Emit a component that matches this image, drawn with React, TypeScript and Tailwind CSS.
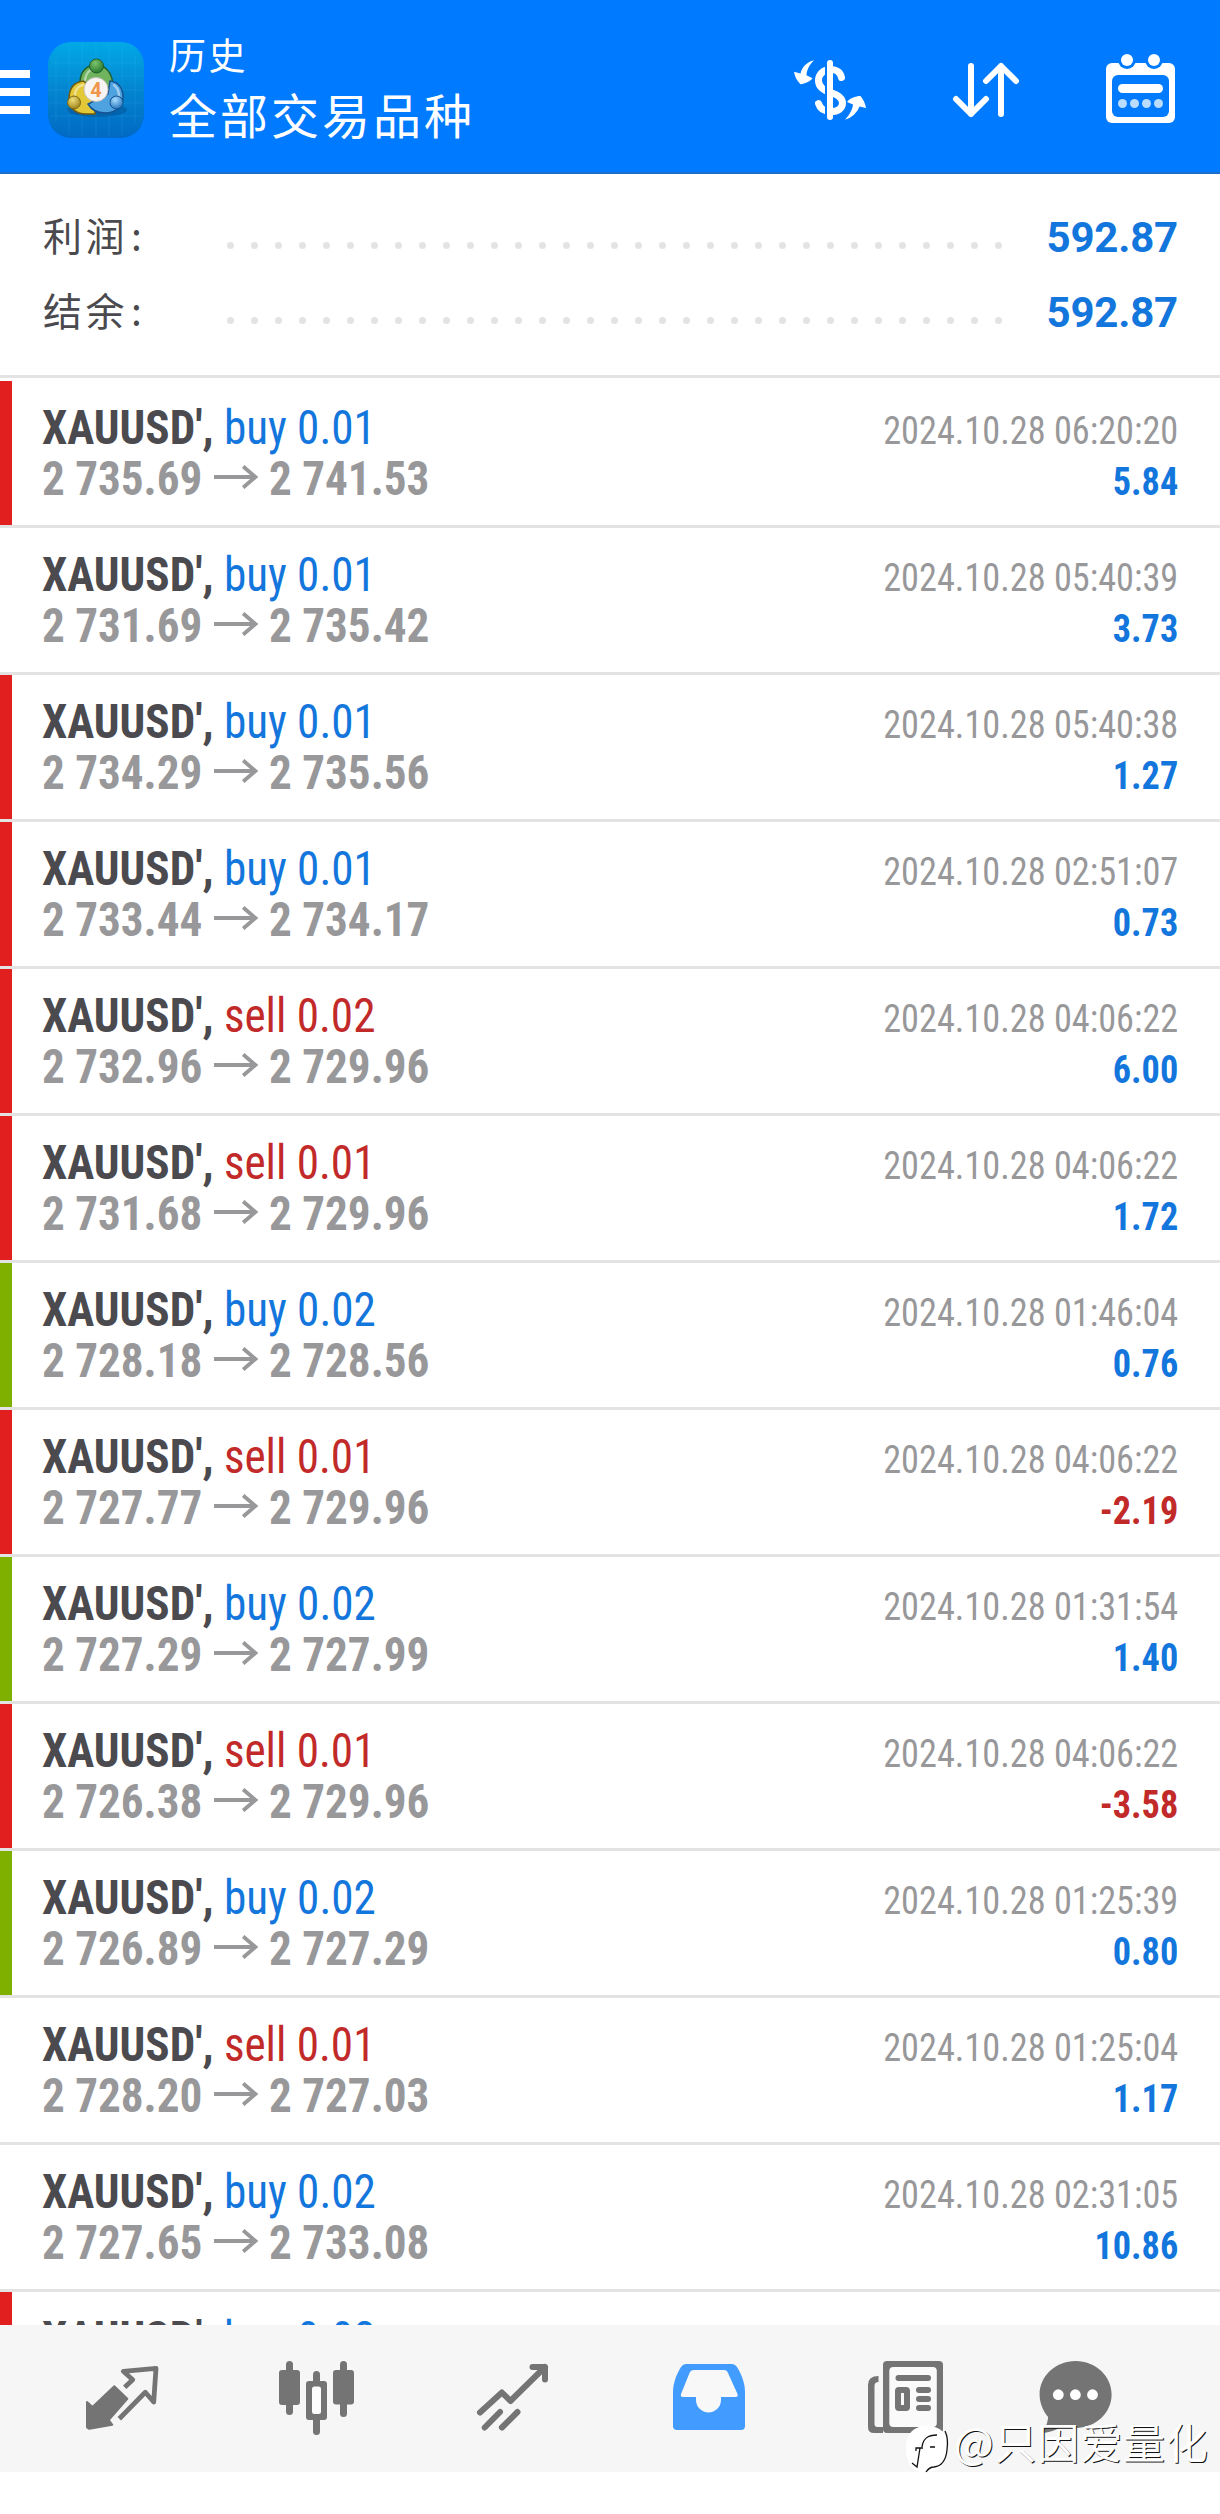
import { clsx } from "clsx"

type Trade = {
  side: "buy" | "sell"
  lot: string
  open: string
  close: string
  time: string
  profit: string
  mark?: "sl" | "tp"
}

const trades: Trade[] = [
  { side: "buy", lot: "0.01", open: "2 735.69", close: "2 741.53", time: "2024.10.28 06:20:20", profit: "5.84", mark: "sl" },
  { side: "buy", lot: "0.01", open: "2 731.69", close: "2 735.42", time: "2024.10.28 05:40:39", profit: "3.73" },
  { side: "buy", lot: "0.01", open: "2 734.29", close: "2 735.56", time: "2024.10.28 05:40:38", profit: "1.27", mark: "sl" },
  { side: "buy", lot: "0.01", open: "2 733.44", close: "2 734.17", time: "2024.10.28 02:51:07", profit: "0.73", mark: "sl" },
  { side: "sell", lot: "0.02", open: "2 732.96", close: "2 729.96", time: "2024.10.28 04:06:22", profit: "6.00", mark: "sl" },
  { side: "sell", lot: "0.01", open: "2 731.68", close: "2 729.96", time: "2024.10.28 04:06:22", profit: "1.72", mark: "sl" },
  { side: "buy", lot: "0.02", open: "2 728.18", close: "2 728.56", time: "2024.10.28 01:46:04", profit: "0.76", mark: "tp" },
  { side: "sell", lot: "0.01", open: "2 727.77", close: "2 729.96", time: "2024.10.28 04:06:22", profit: "-2.19", mark: "sl" },
  { side: "buy", lot: "0.02", open: "2 727.29", close: "2 727.99", time: "2024.10.28 01:31:54", profit: "1.40", mark: "tp" },
  { side: "sell", lot: "0.01", open: "2 726.38", close: "2 729.96", time: "2024.10.28 04:06:22", profit: "-3.58", mark: "sl" },
  { side: "buy", lot: "0.02", open: "2 726.89", close: "2 727.29", time: "2024.10.28 01:25:39", profit: "0.80", mark: "tp" },
  { side: "sell", lot: "0.01", open: "2 728.20", close: "2 727.03", time: "2024.10.28 01:25:04", profit: "1.17" },
  { side: "buy", lot: "0.02", open: "2 727.65", close: "2 733.08", time: "2024.10.28 02:31:05", profit: "10.86" },
]

function AppLogo() {
  return (
    <svg className="ml-[18px] size-24 shrink-0" viewBox="0 0 96 96">
      <defs>
        <linearGradient id="tile" x1="0" y1="0" x2="0" y2="1">
          <stop offset="0" stopColor="#02a9e6" />
          <stop offset="0.5" stopColor="#0385cf" />
          <stop offset="1" stopColor="#0169c4" />
        </linearGradient>
        <radialGradient id="green" cx="0.4" cy="0.3" r="0.8">
          <stop offset="0" stopColor="#7cc36c" />
          <stop offset="1" stopColor="#1f7027" />
        </radialGradient>
        <radialGradient id="yellow" cx="0.4" cy="0.3" r="0.8">
          <stop offset="0" stopColor="#efe07c" />
          <stop offset="1" stopColor="#94770f" />
        </radialGradient>
        <radialGradient id="blue" cx="0.4" cy="0.3" r="0.8">
          <stop offset="0" stopColor="#a7dcff" />
          <stop offset="1" stopColor="#1668b4" />
        </radialGradient>
      </defs>
      <rect width="96" height="96" rx="23" fill="url(#tile)" />
      <path
        d="M8 16v64M21 3v90M34 1v94M48 1v94M61 1v94M74 3v90M87 14v68M3 21h90M1 34h94M1 48h94M1 61h94M3 74h90"
        stroke="#5fd0ff"
        strokeOpacity="0.14"
        strokeWidth="1"
      />
      <ellipse cx="49" cy="68" rx="30" ry="7" fill="#043f78" opacity="0.35" />
      <path d="M32 41c0-12 7-18 16-18s16 7 17 20l-6 8H38z" fill="#6fb35f" stroke="#1f5f2a" strokeWidth="1.5" />
      <path d="M36 39c-10 1-15 7-15 18 0 9 7 15 17 15h9V52z" fill="#e3c838" stroke="#6f5a10" strokeWidth="1.5" />
      <path d="M62 39c9 1 13 8 13 16 0 10-8 16-18 16-8 0-14-4-17-9l20-10z" fill="#4fa2e0" stroke="#155391" strokeWidth="1.5" />
      <path d="M37 38c1-7 5-11 10-11M27 53c0-5 3-9 8-10M66 43c4 3 5 7 5 11" fill="none" stroke="#fff" strokeOpacity="0.45" strokeWidth="2.5" strokeLinecap="round" />
      <circle cx="48.500" cy="24" r="7" fill="url(#green)" stroke="#1f5f2a" />
      <circle cx="26" cy="60.500" r="6.500" fill="url(#yellow)" stroke="#7d6512" />
      <circle cx="68.500" cy="60.500" r="6.500" fill="url(#blue)" stroke="#155391" />
      <circle cx="48" cy="47.500" r="12" fill="#f7f5f3" stroke="#c9c0b8" />
      <text x="48" y="54.500" textAnchor="middle" fontFamily="Roboto, sans-serif" fontSize="20" fontWeight="700" fill="#f0954c">
        4
      </text>
    </svg>
  )
}

function CurrencyIcon() {
  return (
    <svg className="h-[72px] w-[84px]" viewBox="0 0 84 72" fill="none">
      <path
        d="M56.500 23.500c-1-5-5-8-10.500-8-8 0-12.500 5-12.500 11 0 6 4 9.500 12 12 8 2.500 12 5.500 12 10.500 0 5.500-4.500 8.500-11.500 8.500-7 0-11-3-12.500-8"
        stroke="#fff"
        strokeWidth="7"
        strokeLinecap="round"
      />
      <path d="M40 8h4v56h-4z" fill="#007aff" />
      <path d="M45 9v54" stroke="#fff" strokeWidth="6" strokeLinecap="round" />
      <path d="M29 6.300C22 8 17 13 15.500 19.500L9 17.700c.5 4.500 3 9 6.500 12.500 4.500-.5 9.500-2.500 12-5.900l-6-3c0-5.500 3.500-11 7.500-15z" fill="#fff" />
      <path d="M60 65.700c7-2 12-7 14.500-13.200l6.500 1.500c-.5-4.500-3-9-5.500-12-5 0-11 2.500-13.500 6l6 2.500c-.5 5.500-4 11-8 15.200z" fill="#fff" />
    </svg>
  )
}

function SortIcon() {
  return (
    <svg className="size-[72px]" viewBox="0 0 72 72" fill="none" stroke="#fff" strokeWidth="6" strokeLinecap="round" strokeLinejoin="round">
      <path d="M21 12v48M6 45l15 15 15-15M51 60V12M36 27l15-15 15 15" />
    </svg>
  )
}

function CalendarIcon() {
  return (
    <svg className="size-[72px]" viewBox="0 0 72 72">
      <rect x="1" y="9" width="69" height="60" rx="6" fill="#fff" />
      <rect x="7" y="21" width="57" height="42" rx="6" fill="#007aff" />
      <circle cx="22" cy="6" r="9" fill="#007aff" />
      <circle cx="49" cy="6" r="9" fill="#007aff" />
      <circle cx="22" cy="6" r="6" fill="#fff" />
      <circle cx="49" cy="6" r="6" fill="#fff" />
      <rect x="13" y="30" width="45" height="9" rx="4.500" fill="#fff" />
      <g fill="#b9dcff">
        <circle cx="17.500" cy="49.500" r="4.500" />
        <circle cx="29.500" cy="49.500" r="4.500" />
        <circle cx="41.500" cy="49.500" r="4.500" />
        <circle cx="53.500" cy="49.500" r="4.500" />
      </g>
    </svg>
  )
}

function Header() {
  return (
    <header className="flex h-[174px] items-start border-b-2 border-[#1a6fce] bg-[#007aff] text-white">
      <div className="flex w-[30px] shrink-0 flex-col gap-[10px] pt-[70px]">
        <span className="h-2 bg-white" />
        <span className="h-2 bg-white" />
        <span className="h-2 bg-white" />
      </div>
      <div className="pt-[42px]">
        <AppLogo />
      </div>
      <div className="ml-[25px] flex flex-col pt-[27px] font-['Noto_Sans_CJK_SC',sans-serif]">
        <span className="text-[37px] leading-[54px] tracking-[2.500px]">历史</span>
        <span className="text-[48px] leading-[64px] tracking-[3px]">全部交易品种</span>
      </div>
      <div className="ml-auto flex items-start pr-[43px] pt-[54px]">
        <CurrencyIcon />
        <div className="ml-[81px]">
          <SortIcon />
        </div>
        <div className="ml-[83px]">
          <CalendarIcon />
        </div>
      </div>
    </header>
  )
}

function SummaryRow({ label, value }: { label: string; value: string }) {
  return (
    <div className="flex h-[75px] items-center">
      <span className="flex w-[185px] shrink-0 items-center pb-[5px] pl-px font-['Noto_Sans_CJK_SC',sans-serif] text-[39px] leading-none tracking-[3.500px] text-[#4a4a4e]">
        {label}
        <span className="pl-[3px]">:</span>
      </span>
      <div className="flex w-[775px] justify-between pt-[17px]">
        {Array.from({ length: 33 }, (_, i) => (
          <span key={i} className="size-[7px] rounded-full bg-[#e3e3e5]" />
        ))}
      </div>
      <span className="ml-auto pt-[2px] font-[Roboto,sans-serif] text-[42px] font-bold leading-none tracking-[-0.200px] text-[#1376dc]">
        {value}
      </span>
    </div>
  )
}

function TradeRow({ trade }: { trade: Trade }) {
  const loss = trade.profit.startsWith("-")
  return (
    <li className="flex h-[147px] border-b-[3px] border-[#e3e3e4]">
      <span className={clsx("w-3 shrink-0", trade.mark === "sl" && "bg-[#e21f1f]", trade.mark === "tp" && "bg-[#7fb000]")} />
      <div className="flex flex-1 justify-between pl-[30px] pr-[42px] pt-[21px] font-[Roboto,sans-serif] font-stretch-condensed">
        <div className="flex origin-left scale-x-[0.94] flex-col text-[48px] leading-[51px]">
          <span className="whitespace-pre">
            <span className="font-bold text-[#4a4a4f]">XAUUSD&apos;, </span>
            <span className={trade.side === "buy" ? "text-[#1376dc]" : "text-[#c22a2a]"}>
              {trade.side} {trade.lot}
            </span>
          </span>
          <span className="flex items-center font-bold text-[#98989a]">
            {trade.open}
            <svg className="mx-[12px] mb-[4px] h-6 w-[47px]" viewBox="0 0 47 24" fill="none" stroke="currentColor" strokeWidth="4">
              <path d="M0 12h44M31 1.500l13 10.500-13 10.500" />
            </svg>
            {trade.close}
          </span>
        </div>
        <div className="flex origin-right scale-x-[0.93] flex-col items-end pt-[4px] text-[39px] leading-[51px]">
          <span className="text-[#98989a]">{trade.time}</span>
          <span className={clsx("font-bold", loss ? "text-[#c22a2a]" : "text-[#1376dc]")}>{trade.profit}</span>
        </div>
      </div>
    </li>
  )
}

function TabBar() {
  return (
    <nav className="flex h-[147px] shrink-0 bg-[#f6f6f6] pl-[23px] text-[#747474]">
      <div className="flex w-[196px] justify-center">
        <svg className="h-[147px] w-24" viewBox="0 0 96 147">
          <path d="M51.700 62.300l8-7.600-9.400-8.400L83 43.300 80.700 77l-8.400-9.700-26 26.400" fill="none" stroke="currentColor" strokeWidth="4.800" strokeLinejoin="round" />
          <path d="M41.300 61.300l13 12.500L35.700 95l3.600 4.800-23 4-2.300-1.500V77l5.500 5z" fill="currentColor" stroke="currentColor" strokeWidth="2" strokeLinejoin="round" />
        </svg>
      </div>
      <div className="flex w-[196px] justify-center">
        <svg className="h-[147px] w-24" viewBox="0 0 96 147" fill="currentColor">
          <rect x="17" y="36" width="7" height="54" rx="3.500" />
          <rect x="10" y="45" width="21" height="35" rx="3" />
          <rect x="44" y="46" width="7" height="64" rx="3.500" />
          <rect x="37" y="56" width="21" height="39" rx="3" />
          <rect x="43" y="61.500" width="9" height="27.500" rx="2.500" fill="#fdfdfd" />
          <rect x="71" y="36" width="7" height="56" rx="3.500" />
          <rect x="64" y="45" width="21" height="34.500" rx="3" />
        </svg>
      </div>
      <div className="flex w-[196px] justify-center">
        <svg className="h-[147px] w-24" viewBox="0 0 96 147" fill="none" stroke="currentColor" strokeWidth="6" strokeLinecap="round" strokeLinejoin="round">
          <path d="M15 87.500L36.900 67.500l8.500 8.500L80 42M67.500 42H80v12.500" />
          <path d="M19.700 102.500L35 87M36.900 102.500L52.500 87" />
        </svg>
      </div>
      <div className="flex w-[196px] justify-center">
        <svg className="h-[147px] w-24" viewBox="0 0 96 147">
          <path d="M25 39h46q3 0 5 3c5 8 8 17 8 25v34q0 4-4 4H16q-4 0-4-4V67c0-8 3-17 8-25q2-3 5-3z" fill="#429bff" />
          <path d="M33 45h30q3 0 4 3l9.500 21q1 3-2 3H60v3a12.500 12.500 0 0 1-25 0v-3H22q-3 0-2-3l8.500-21q1-3 4.500-3z" fill="#f8f8f8" />
        </svg>
      </div>
      <div className="flex w-[196px] justify-center">
        <svg className="h-[147px] w-24" viewBox="0 0 96 147" fill="currentColor">
          <path d="M21.500 51v6q-4 0-4 4v38q0 3 3 3H26v6H17q-6 0-6-6V60q0-9 10.500-9z" />
          <rect x="26" y="36" width="60" height="72" rx="4" />
          <rect x="32.300" y="42" width="47.500" height="60" rx="4" fill="#fafafa" />
          <rect x="38.500" y="50" width="35.500" height="6" rx="3" />
          <rect x="41" y="65" width="9" height="18" rx="1" fill="none" stroke="currentColor" strokeWidth="6" strokeLinejoin="round" />
          <rect x="59" y="62" width="15" height="6" rx="3" />
          <rect x="59" y="71" width="15" height="6" rx="3" />
          <rect x="59" y="80" width="15" height="6" rx="3" />
        </svg>
      </div>
      <div className="flex w-[143px] justify-center">
        <svg className="h-[147px] w-24" viewBox="0 0 96 147">
          <path d="M48.600 36c20 0 36 15 36 33.500S68.600 103 48.600 103c-5 0-9-1-13-2-6 4-14 7-22 7 5-4 7-10 7.500-16-5-6-8.500-14-8.500-22.500C12.600 51 28.600 36 48.600 36z" fill="currentColor" />
          <circle cx="31.300" cy="69.700" r="5.400" fill="#fff" />
          <circle cx="48.400" cy="69.700" r="5.400" fill="#fff" />
          <circle cx="65.500" cy="69.700" r="5.400" fill="#fff" />
        </svg>
      </div>
    </nav>
  )
}

function Watermark() {
  return (
    <div className="absolute left-[905px] top-[2424px] flex items-start text-white">
      <svg className="h-[50px] w-[46px]" viewBox="0 0 46 50" fill="none">
        <path d="M22 2c14 0 21 8 21 22 0 14-6 22-16 23l-7 2C6 47 1 38 1 24S8 2 22 2z" fill="#fff" />
        <path d="M7 39l5 4 3-19M11 27v-3h7M25 23h5M17 23c1-8 5-12 15-12M40 7c3 6 3 12 2 19-1 10-5 16-13 17-4 0-6 2-8 5" stroke="#111" strokeWidth="1.300" />
      </svg>
      <span className="-mt-[8px] ml-[3px] whitespace-nowrap font-['Noto_Sans_CJK_SC',sans-serif] text-[42px] leading-[50px] tracking-[0.800px] [text-shadow:1px_1px_0_#111]">
        @只因爱量化
      </span>
    </div>
  )
}

export default function App() {
  return (
    <div className="relative flex h-[2514px] w-[1220px] flex-col overflow-hidden bg-white">
      <Header />
      <section className="h-[204px] shrink-0 border-b-[3px] border-[#e3e3e4] pl-[42px] pr-[42px] pt-[25px]">
        <SummaryRow label="利润" value="592.87" />
        <SummaryRow label="结余" value="592.87" />
      </section>
      <ul className="h-[1947px] shrink-0 overflow-hidden pt-[3px]">
        {trades.map((trade, i) => (
          <TradeRow key={i} trade={trade} />
        ))}
        <TradeRow trade={{ side: "buy", lot: "0.02", open: "", close: "", time: "", profit: "", mark: "sl" }} />
      </ul>
      <TabBar />
      <Watermark />
    </div>
  )
}
